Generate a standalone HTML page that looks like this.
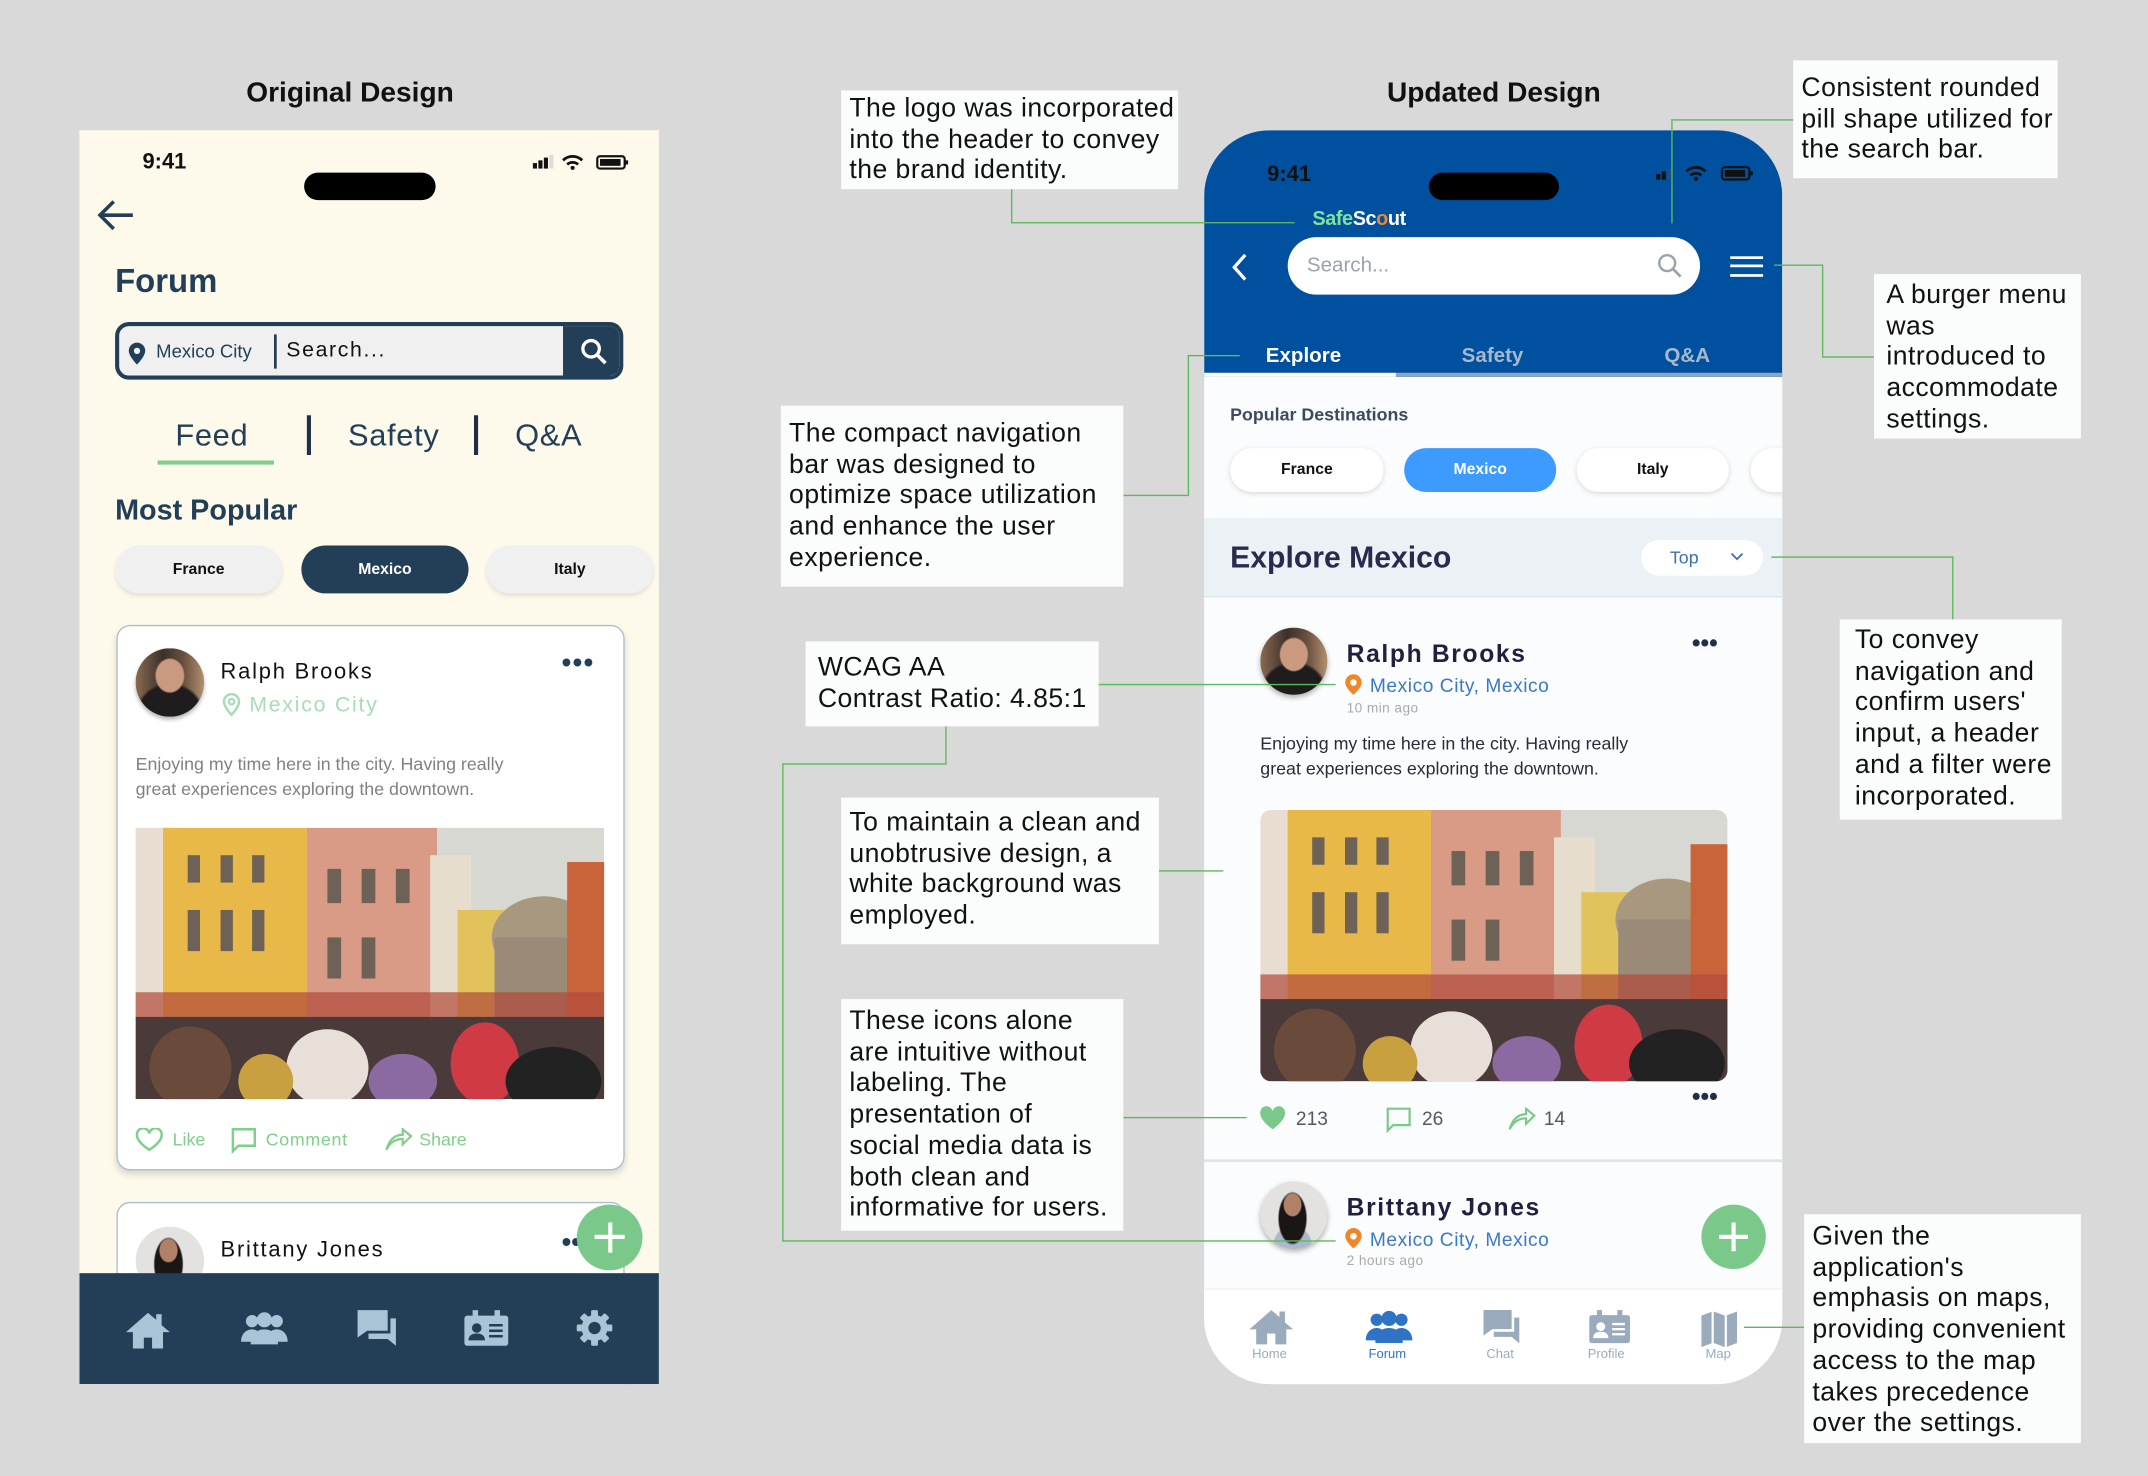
<!DOCTYPE html>
<html><head><meta charset="utf-8">
<style>
*{margin:0;padding:0;box-sizing:border-box}
html,body{width:2148px;height:1476px;overflow:hidden;background:#d9d9d9}
#s{position:absolute;left:0;top:0;width:1568px;height:1077px;transform:scale(1.36990,1.37047);transform-origin:0 0;font-family:"Liberation Sans",sans-serif}
.a{position:absolute}
.t{position:absolute;white-space:nowrap}
.box{position:absolute;background:#fbfdfc;color:#111;font-size:19.4px;letter-spacing:.35px;line-height:22.7px;padding:3px 6px;white-space:nowrap}
.gl{position:absolute;background:#5cb85c}
.h{height:1.4px}.v{width:1.4px}
.pill{position:absolute;border-radius:20px;font-size:11.5px;font-weight:bold;display:flex;align-items:center;justify-content:center}
.av1{background:radial-gradient(ellipse 22% 26% at 50% 40%,#c99a80 0 90%,transparent 100%),radial-gradient(ellipse 50% 45% at 50% 95%,#1e1c1c 0 90%,transparent 100%),linear-gradient(90deg,#8a6a50,#3a302a 40%,#6a5040 70%,#b09070)}
.av2{background:radial-gradient(ellipse 14% 18% at 48% 35%,#b08068 0 90%,transparent 100%),radial-gradient(ellipse 22% 40% at 48% 55%,#1a1616 0 90%,transparent 100%),radial-gradient(ellipse 30% 30% at 48% 95%,#a9b8cc 0 90%,transparent 100%),#e4e2e0}
</style></head><body><div id="s">

<div class="t" style="left:0;width:511px;text-align:center;top:56px;font-size:20.5px;font-weight:bold;color:#111">Original Design</div>
<div class="t" style="left:880px;width:421px;text-align:center;top:56px;font-size:20.5px;font-weight:bold;color:#111">Updated Design</div>

<!-- LEFT PHONE -->
<div class="a" style="left:58px;top:95px;width:423px;height:915px;background:#fdfaec;overflow:hidden">
  <div class="t" style="left:46px;top:15px;font-size:16px;font-weight:bold;color:#111">9:41</div>
  <div class="a" style="left:164px;top:31px;width:96px;height:20px;border-radius:10px;background:#000"></div>
  <svg class="a" style="left:329px;top:17px" width="72" height="14" viewBox="0 0 72 14"><rect x="2" y="7" width="3" height="4" fill="#111"/><rect x="6" y="5" width="3" height="6" fill="#111"/><rect x="10" y="3" width="3" height="8" fill="#111"/><rect x="14" y="1" width="3" height="10" fill="#ddd"/><path d="M24 5a10 10 0 0 1 14 0M27 8a6 6 0 0 1 8 0" stroke="#111" stroke-width="2" fill="none"/><circle cx="31" cy="10.5" r="1.5" fill="#111"/><rect x="49" y="2" width="20" height="9" rx="2" stroke="#111" stroke-width="1.6" fill="none"/><rect x="51" y="4" width="15" height="5" fill="#111"/><rect x="69.5" y="5" width="2" height="3" fill="#111"/></svg>
  <svg class="a" style="left:12px;top:49px" width="30" height="26" viewBox="0 0 30 26"><path d="M27 13H3M13 3L3 13l10 10" stroke="#223f57" stroke-width="2.6" fill="none"/></svg>
  <div class="t" style="left:26px;top:97px;font-size:24px;font-weight:bold;color:#223f57">Forum</div>
  <div class="a" style="left:26px;top:140px;width:371px;height:42px;border:3px solid #223f57;border-radius:10px;background:#f0f0f0;overflow:hidden">
    <svg class="a" style="left:5px;top:11px" width="16" height="18" viewBox="0 0 16 18"><path d="M8 1a6 6 0 0 1 6 6c0 4-6 10-6 10S2 11 2 7a6 6 0 0 1 6-6z" fill="#223f57"/><circle cx="8" cy="7" r="2.3" fill="#f0f0f0"/></svg>
    <div class="t" style="left:27px;top:11px;font-size:13.5px;color:#223f57">Mexico City</div>
    <div class="a" style="left:113px;top:6px;width:2px;height:25px;background:#223f57"></div>
    <div class="t" style="left:122px;top:9px;font-size:15.5px;color:#111;letter-spacing:1.2px">Search...</div>
    <div class="a" style="left:324px;top:-3px;width:50px;height:42px;background:#223f57"></div>
    <svg class="a" style="left:336px;top:8px" width="22" height="22" viewBox="0 0 22 22"><circle cx="8.5" cy="8.5" r="6" stroke="#fff" stroke-width="2.4" fill="none"/><path d="M13 13l6 6" stroke="#fff" stroke-width="2.6"/></svg>
  </div>
  <div class="t" style="left:70px;top:210px;font-size:22.5px;color:#223f57;letter-spacing:.5px">Feed</div>
  <div class="a" style="left:57px;top:241px;width:85px;height:3px;background:#7dcf8a"></div>
  <div class="a" style="left:166px;top:208px;width:3px;height:29px;background:#1f2f47"></div>
  <div class="t" style="left:196px;top:210px;font-size:22.5px;color:#223f57;letter-spacing:.5px">Safety</div>
  <div class="a" style="left:288px;top:208px;width:3px;height:29px;background:#1f2f47"></div>
  <div class="t" style="left:318px;top:210px;font-size:22.5px;color:#223f57;letter-spacing:.5px">Q&amp;A</div>
  <div class="t" style="left:26px;top:266px;font-size:21px;font-weight:bold;color:#223f57">Most Popular</div>
  <div class="pill" style="left:26px;top:303px;width:122px;height:35px;background:#f0f0f0;color:#111;box-shadow:0 2px 3px rgba(0,0,0,.1)">France</div>
  <div class="pill" style="left:162px;top:303px;width:122px;height:35px;background:#223f57;color:#fff">Mexico</div>
  <div class="pill" style="left:297px;top:303px;width:122px;height:35px;background:#f0f0f0;color:#111;box-shadow:0 2px 3px rgba(0,0,0,.1)">Italy</div>
  <div class="a" style="left:27px;top:361px;width:371px;height:398px;background:#fff;border:1px solid #a9c0cc;border-radius:10px;box-shadow:0 3px 5px rgba(0,0,0,.15)">
    <div class="a av1" style="left:13px;top:16px;width:50px;height:50px;border-radius:50%;box-shadow:0 2px 3px rgba(0,0,0,.3)"></div>
    <div class="t" style="left:75px;top:25px;font-size:16px;letter-spacing:1.3px;color:#111">Ralph Brooks</div>
    <svg class="a" style="left:75px;top:48px" width="16" height="18" viewBox="0 0 16 18"><path d="M8 1.5a5.5 5.5 0 0 1 5.5 5.5c0 4-5.5 9.5-5.5 9.5S2.5 11 2.5 7A5.5 5.5 0 0 1 8 1.5z" stroke="#a8dcb5" stroke-width="1.8" fill="none"/><circle cx="8" cy="7" r="2" stroke="#a8dcb5" stroke-width="1.6" fill="none"/></svg>
    <div class="t" style="left:96px;top:49px;font-size:15.5px;letter-spacing:1.3px;color:#a8dcb5">Mexico City</div>
    <div class="t" style="left:324px;top:16px;font-size:20px;font-weight:bold;color:#223f57;letter-spacing:1px">•••</div>
    <div class="t" style="left:13px;top:92px;font-size:13px;line-height:18px;color:#808080">Enjoying my time here in the city. Having really<br>great experiences exploring the downtown.</div>
    <svg class="a" style="left:13px;top:147px" width="342" height="198" viewBox="0 0 342 198" preserveAspectRatio="none">
      <rect width="342" height="198" fill="#d8d8d2"/>
      <rect x="0" y="0" width="25" height="198" fill="#e8ddd0"/>
      <rect x="20" y="0" width="105" height="170" fill="#e8b948"/>
      <rect x="125" y="0" width="95" height="175" fill="#d99a86"/>
      <rect x="215" y="20" width="30" height="150" fill="#e6ddcc"/>
      <rect x="235" y="60" width="35" height="110" fill="#e2c25a"/>
      <ellipse cx="298" cy="80" rx="38" ry="30" fill="#a89880"/>
      <rect x="262" y="80" width="70" height="100" fill="#9a8a78"/>
      <rect x="315" y="25" width="28" height="170" fill="#c9643a"/>
      <g fill="#6e6256"><rect x="38" y="20" width="9" height="20"/><rect x="62" y="20" width="9" height="20"/><rect x="85" y="20" width="9" height="20"/><rect x="38" y="60" width="9" height="30"/><rect x="62" y="60" width="9" height="30"/><rect x="85" y="60" width="9" height="30"/><rect x="140" y="30" width="10" height="25"/><rect x="165" y="30" width="10" height="25"/><rect x="190" y="30" width="10" height="25"/><rect x="140" y="80" width="10" height="30"/><rect x="165" y="80" width="10" height="30"/></g>
      <rect x="0" y="120" width="342" height="20" fill="#b04a3a" opacity=".7"/>
      <rect x="0" y="138" width="342" height="60" fill="#4a3a3a"/>
      <g><ellipse cx="40" cy="175" rx="30" ry="30" fill="#6a4a3a"/><ellipse cx="140" cy="175" rx="30" ry="28" fill="#e8e0d8"/><ellipse cx="255" cy="172" rx="25" ry="30" fill="#d03a44"/><ellipse cx="305" cy="185" rx="35" ry="25" fill="#222"/><ellipse cx="195" cy="185" rx="25" ry="20" fill="#8a6aa0"/><ellipse cx="95" cy="185" rx="20" ry="20" fill="#c9a040"/></g>
    </svg>
    <svg class="a" style="left:12px;top:366px" width="22" height="18" viewBox="0 0 22 18"><path d="M11 16S2 10.5 2 5.5A4.5 4.5 0 0 1 11 4a4.5 4.5 0 0 1 9 1.5C20 10.5 11 16 11 16z" stroke="#7dcf8a" stroke-width="1.8" fill="none"/></svg>
    <div class="t" style="left:40px;top:367px;font-size:13px;color:#7dcf8a">Like</div>
    <svg class="a" style="left:82px;top:365px" width="20" height="20" viewBox="0 0 20 20"><path d="M2 2h16v12H6l-4 4z" stroke="#7dcf8a" stroke-width="1.8" fill="none"/></svg>
    <div class="t" style="left:108px;top:367px;font-size:13px;color:#7dcf8a;letter-spacing:.5px">Comment</div>
    <svg class="a" style="left:194px;top:366px" width="22" height="18" viewBox="0 0 22 18"><path d="M2 16c3-6 7-8 12-8v4l6-6-6-5v4C8 5 4 9 2 16z" stroke="#7dcf8a" stroke-width="1.6" fill="none"/></svg>
    <div class="t" style="left:220px;top:367px;font-size:13px;color:#7dcf8a">Share</div>
  </div>
  <div class="a" style="left:27px;top:782px;width:371px;height:160px;background:#fff;border:1px solid #a9c0cc;border-radius:10px">
    <div class="a av2" style="left:13px;top:17px;width:50px;height:50px;border-radius:50%"></div>
    <div class="t" style="left:75px;top:26px;font-size:16px;letter-spacing:1.3px;color:#111">Brittany Jones</div>
    <div class="t" style="left:324px;top:18px;font-size:20px;font-weight:bold;color:#223f57">••</div>
  </div>
  <div class="a" style="left:363px;top:784px;width:48px;height:48px;border-radius:50%;background:#7bc98a"></div>
  <div class="a" style="left:376px;top:806px;width:22px;height:3px;background:#fff"></div>
  <div class="a" style="left:385.5px;top:797px;width:3px;height:22px;background:#fff"></div>
  <div class="a" style="left:0;top:834px;width:423px;height:81px;background:#223f57"></div>
  <svg class="a" style="left:32px;top:860px" width="36" height="30" viewBox="0 0 36 30"><path d="M18 3L2 17h5v12h8v-8h6v8h8V17h5l-6-5V4h-4v4z" fill="#a9c4d6"/></svg>
  <svg class="a" style="left:117px;top:862px" width="36" height="26" viewBox="0 0 36 26"><circle cx="9" cy="7" r="4.5" fill="#a9c4d6"/><circle cx="27" cy="7" r="4.5" fill="#a9c4d6"/><circle cx="18" cy="6" r="5.5" fill="#a9c4d6"/><path d="M1 22c0-6 4-9 8-9s7 3 7 9zM20 22c0-6 3-9 7-9s8 3 8 9zM8 24c0-7 4-11 10-11s10 4 10 11z" fill="#a9c4d6"/></svg>
  <svg class="a" style="left:201px;top:859px" width="32" height="30" viewBox="0 0 32 30"><path d="M2 2h22v15H9l-7 5z" fill="#a9c4d6"/><path d="M26 8h4v20l-6-5H10v-4h16z" fill="#a9c4d6"/></svg>
  <svg class="a" style="left:280px;top:860px" width="34" height="28" viewBox="0 0 34 28"><rect x="1" y="5" width="32" height="22" rx="2" fill="#a9c4d6"/><rect x="7" y="1" width="4" height="6" fill="#a9c4d6"/><rect x="23" y="1" width="4" height="6" fill="#a9c4d6"/><circle cx="10" cy="14" r="3.5" fill="#223f57"/><path d="M4 23c0-4 3-5 6-5s6 1 6 5z" fill="#223f57"/><path d="M19 12h10M19 16h10M19 20h10" stroke="#223f57" stroke-width="1.8"/></svg>
  <svg class="a" style="left:362px;top:860px" width="28" height="28" viewBox="0 0 28 28"><g fill="#a9c4d6"><circle cx="14" cy="14" r="9.5"/><rect x="11.5" y="1" width="5" height="26" rx="1"/><rect x="11.5" y="1" width="5" height="26" rx="1" transform="rotate(45 14 14)"/><rect x="11.5" y="1" width="5" height="26" rx="1" transform="rotate(90 14 14)"/><rect x="11.5" y="1" width="5" height="26" rx="1" transform="rotate(135 14 14)"/></g><circle cx="14" cy="14" r="4.5" fill="#223f57"/></svg>
</div>

<!-- RIGHT PHONE -->
<div class="a" style="left:879px;top:95px;width:422px;height:915px;background:#fbfcfd;border-radius:48px;overflow:hidden">
  <div class="a" style="left:0;top:0;width:422px;height:180px;background:#0050a0"></div>
  <div class="t" style="left:46px;top:24px;font-size:16px;font-weight:bold;color:#111">9:41</div>
  <div class="a" style="left:164px;top:31px;width:95px;height:20px;border-radius:10px;background:#000"></div>
  <svg class="a" style="left:328px;top:25px" width="74" height="14" viewBox="0 0 74 14"><rect x="2" y="7" width="3" height="4" fill="#111"/><rect x="6" y="5" width="3" height="6" fill="#111"/><rect x="10" y="3" width="3" height="8" fill="#1b4f8c"/><path d="M24 5a10 10 0 0 1 14 0M27 8a6 6 0 0 1 8 0" stroke="#111" stroke-width="2" fill="none"/><circle cx="31" cy="10.5" r="1.5" fill="#111"/><rect x="50" y="2" width="20" height="9" rx="2" stroke="#111" stroke-width="1.6" fill="none"/><rect x="52" y="4" width="15" height="5" fill="#111"/><rect x="70.5" y="5" width="2" height="3" fill="#111"/></svg>
  <div class="t" style="left:79px;top:57px;font-size:14.5px;font-weight:bold;letter-spacing:-.3px"><span style="color:#7de39a">Safe</span><span style="color:#fff">Sc<span style="color:#f0862a">o</span>ut</span></div>
  <svg class="a" style="left:18px;top:89px" width="16" height="22" viewBox="0 0 16 22"><path d="M12 2L4 11l8 9" stroke="#fff" stroke-width="2.4" fill="none"/></svg>
  <div class="a" style="left:61px;top:78px;width:301px;height:42px;border-radius:21px;background:#fff"></div>
  <div class="t" style="left:75px;top:90px;font-size:15px;color:#9aa3ac">Search...</div>
  <svg class="a" style="left:330px;top:89px" width="20" height="20" viewBox="0 0 20 20"><circle cx="8" cy="8" r="5.8" stroke="#9aa3ac" stroke-width="1.8" fill="none"/><path d="M12.3 12.3l5.5 5.5" stroke="#9aa3ac" stroke-width="2"/></svg>
  <div class="a" style="left:384px;top:92px;width:24px;height:2px;background:#fff"></div>
  <div class="a" style="left:384px;top:98px;width:24px;height:2px;background:#fff"></div>
  <div class="a" style="left:384px;top:105px;width:24px;height:2px;background:#fff"></div>
  <div class="t" style="left:45px;top:156px;font-size:15px;font-weight:bold;color:#fff">Explore</div>
  <div class="t" style="left:188px;top:156px;font-size:15px;font-weight:bold;color:#a8b8cc">Safety</div>
  <div class="t" style="left:336px;top:156px;font-size:15px;font-weight:bold;color:#a8b8cc">Q&amp;A</div>
  <div class="a" style="left:0;top:177px;width:140px;height:3px;background:#fff"></div>
  <div class="a" style="left:140px;top:177px;width:282px;height:3px;background:#8fa6bf"></div>
  <div class="t" style="left:19px;top:200px;font-size:13px;font-weight:bold;color:#3b4a5e">Popular Destinations</div>
  <div class="pill" style="left:19px;top:232px;width:112px;height:32px;background:#fff;color:#111;box-shadow:0 1px 4px rgba(0,0,0,.15)">France</div>
  <div class="pill" style="left:146px;top:232px;width:111px;height:32px;background:#3d9bff;color:#fff">Mexico</div>
  <div class="pill" style="left:272px;top:232px;width:111px;height:32px;background:#fff;color:#111;box-shadow:0 1px 4px rgba(0,0,0,.15)">Italy</div>
  <div class="pill" style="left:399px;top:232px;width:60px;height:32px;background:#fff;box-shadow:0 1px 4px rgba(0,0,0,.15)"></div>
  <div class="a" style="left:0;top:283px;width:422px;height:58px;background:#ebf1f5;border-bottom:1px solid #dde5ec"></div>
  <div class="t" style="left:19px;top:299px;font-size:22px;font-weight:bold;color:#2a2a4e">Explore Mexico</div>
  <div class="a" style="left:319px;top:299px;width:89px;height:26px;border-radius:13px;background:#fff"></div>
  <div class="t" style="left:340px;top:304px;font-size:13px;color:#3a70b0">Top</div>
  <svg class="a" style="left:384px;top:308px" width="10" height="7" viewBox="0 0 10 7"><path d="M1 1l4 4 4-4" stroke="#3a70b0" stroke-width="1.3" fill="none"/></svg>
  <div class="a av1" style="left:41px;top:363px;width:49px;height:49px;border-radius:50%;box-shadow:0 2px 4px rgba(0,0,0,.3)"></div>
  <div class="t" style="left:104px;top:372px;font-size:18px;font-weight:bold;letter-spacing:1.2px;color:#1f1f3f">Ralph Brooks</div>
  <svg class="a" style="left:102px;top:396px" width="14" height="17" viewBox="0 0 14 17"><path d="M7 1a6 6 0 0 1 6 6c0 4-6 9-6 9S1 11 1 7a6 6 0 0 1 6-6z" fill="#f0862a"/><circle cx="7" cy="7" r="2.4" fill="#fff"/></svg>
  <div class="t" style="left:121px;top:397px;font-size:14px;letter-spacing:.4px;color:#3a78c8">Mexico City, Mexico</div>
  <div class="t" style="left:104px;top:417px;font-size:10px;letter-spacing:.3px;color:#aaa">10 min ago</div>
  <div class="t" style="left:356px;top:364px;font-size:18px;font-weight:bold;color:#1f2f47">•••</div>
  <div class="t" style="left:41px;top:439px;font-size:13px;line-height:18px;color:#2a2a3a">Enjoying my time here in the city. Having really<br>great experiences exploring the downtown.</div>
  <svg class="a" style="left:41px;top:496px;border-radius:8px" width="341" height="198" viewBox="0 0 342 198" preserveAspectRatio="none">
      <rect width="342" height="198" fill="#d8d8d2"/>
      <rect x="0" y="0" width="25" height="198" fill="#e8ddd0"/>
      <rect x="20" y="0" width="105" height="170" fill="#e8b948"/>
      <rect x="125" y="0" width="95" height="175" fill="#d99a86"/>
      <rect x="215" y="20" width="30" height="150" fill="#e6ddcc"/>
      <rect x="235" y="60" width="35" height="110" fill="#e2c25a"/>
      <ellipse cx="298" cy="80" rx="38" ry="30" fill="#a89880"/>
      <rect x="262" y="80" width="70" height="100" fill="#9a8a78"/>
      <rect x="315" y="25" width="28" height="170" fill="#c9643a"/>
      <g fill="#6e6256"><rect x="38" y="20" width="9" height="20"/><rect x="62" y="20" width="9" height="20"/><rect x="85" y="20" width="9" height="20"/><rect x="38" y="60" width="9" height="30"/><rect x="62" y="60" width="9" height="30"/><rect x="85" y="60" width="9" height="30"/><rect x="140" y="30" width="10" height="25"/><rect x="165" y="30" width="10" height="25"/><rect x="190" y="30" width="10" height="25"/><rect x="140" y="80" width="10" height="30"/><rect x="165" y="80" width="10" height="30"/></g>
      <rect x="0" y="120" width="342" height="20" fill="#b04a3a" opacity=".7"/>
      <rect x="0" y="138" width="342" height="60" fill="#4a3a3a"/>
      <g><ellipse cx="40" cy="175" rx="30" ry="30" fill="#6a4a3a"/><ellipse cx="140" cy="175" rx="30" ry="28" fill="#e8e0d8"/><ellipse cx="255" cy="172" rx="25" ry="30" fill="#d03a44"/><ellipse cx="305" cy="185" rx="35" ry="25" fill="#222"/><ellipse cx="195" cy="185" rx="25" ry="20" fill="#8a6aa0"/><ellipse cx="95" cy="185" rx="20" ry="20" fill="#c9a040"/></g>
  </svg>
  <div class="t" style="left:356px;top:695px;font-size:18px;font-weight:bold;color:#1f2f47">•••</div>
  <svg class="a" style="left:40px;top:712px" width="20" height="18" viewBox="0 0 20 18"><path d="M10 17S1 11 1 5.5A4.5 4.5 0 0 1 10 4a4.5 4.5 0 0 1 9 1.5C19 11 10 17 10 17z" fill="#7bc98a"/></svg>
  <div class="t" style="left:67px;top:713px;font-size:14px;color:#556">213</div>
  <svg class="a" style="left:132px;top:712px" width="20" height="20" viewBox="0 0 20 20"><path d="M2 2h16v12H6l-4 4z" stroke="#7bc98a" stroke-width="1.6" fill="none"/></svg>
  <div class="t" style="left:159px;top:713px;font-size:14px;color:#556">26</div>
  <svg class="a" style="left:221px;top:713px" width="22" height="18" viewBox="0 0 22 18"><path d="M2 16c3-6 7-8 12-8v4l6-6-6-5v4C8 5 4 9 2 16z" stroke="#7bc98a" stroke-width="1.6" fill="none"/></svg>
  <div class="t" style="left:248px;top:713px;font-size:14px;color:#556">14</div>
  <div class="a" style="left:0;top:751px;width:422px;height:1.5px;background:#dde5ec"></div>
  <div class="a av2" style="left:41px;top:767px;width:49px;height:49px;border-radius:50%;box-shadow:0 2px 4px rgba(0,0,0,.3)"></div>
  <div class="t" style="left:104px;top:776px;font-size:18px;font-weight:bold;letter-spacing:1.2px;color:#1f1f3f">Brittany Jones</div>
  <svg class="a" style="left:102px;top:800px" width="14" height="17" viewBox="0 0 14 17"><path d="M7 1a6 6 0 0 1 6 6c0 4-6 9-6 9S1 11 1 7a6 6 0 0 1 6-6z" fill="#f0862a"/><circle cx="7" cy="7" r="2.4" fill="#fff"/></svg>
  <div class="t" style="left:121px;top:801px;font-size:14px;letter-spacing:.4px;color:#3a78c8">Mexico City, Mexico</div>
  <div class="t" style="left:104px;top:820px;font-size:10px;letter-spacing:.3px;color:#aaa">2 hours ago</div>
  <div class="a" style="left:363px;top:784px;width:47px;height:47px;border-radius:50%;background:#7bc98a"></div>
  <div class="a" style="left:376px;top:806px;width:21px;height:3px;background:#fff"></div>
  <div class="a" style="left:385px;top:797px;width:3px;height:21px;background:#fff"></div>
  <div class="a" style="left:0;top:845px;width:422px;height:70px;background:#fff;border-top:1.5px solid #eef1f4"></div>
  <svg class="a" style="left:31px;top:859px" width="36" height="28" viewBox="0 0 36 28"><path d="M18 2L2 16h5v11h8v-8h6v8h8V16h5l-6-5V3h-4v4z" fill="#9aabbd"/></svg>
  <svg class="a" style="left:117px;top:861px" width="36" height="26" viewBox="0 0 36 26"><circle cx="9" cy="7" r="4.5" fill="#2f74c4"/><circle cx="27" cy="7" r="4.5" fill="#2f74c4"/><circle cx="18" cy="6" r="5.5" fill="#2f74c4"/><path d="M1 22c0-6 4-9 8-9s7 3 7 9zM20 22c0-6 3-9 7-9s8 3 8 9zM8 24c0-7 4-11 10-11s10 4 10 11z" fill="#2f74c4"/></svg>
  <svg class="a" style="left:202px;top:859px" width="30" height="28" viewBox="0 0 32 30"><path d="M2 2h22v15H9l-7 5z" fill="#9aabbd"/><path d="M26 8h4v20l-6-5H10v-4h16z" fill="#9aabbd"/></svg>
  <svg class="a" style="left:279px;top:860px" width="34" height="26" viewBox="0 0 34 28"><rect x="1" y="5" width="32" height="22" rx="2" fill="#9aabbd"/><rect x="7" y="1" width="4" height="6" fill="#9aabbd"/><rect x="23" y="1" width="4" height="6" fill="#9aabbd"/><circle cx="10" cy="14" r="3.5" fill="#fff"/><path d="M4 23c0-4 3-5 6-5s6 1 6 5z" fill="#fff"/><path d="M19 12h10M19 16h10M19 20h10" stroke="#fff" stroke-width="1.8"/></svg>
  <svg class="a" style="left:362px;top:860px" width="28" height="28" viewBox="0 0 28 28"><path d="M1 5l8-3v23l-8 3zM10 2l8 3v23l-8-3zM19 5l8-3v23l-8 3z" fill="#9aabbd"/><path d="M9 2v23M19 5v23" stroke="#fff" stroke-width="1.2"/></svg>
  <div class="t" style="left:35px;top:888px;font-size:9.5px;color:#9aabbd">Home</div>
  <div class="t" style="left:120px;top:888px;font-size:9.5px;color:#2f74c4">Forum</div>
  <div class="t" style="left:206px;top:888px;font-size:9.5px;color:#9aabbd">Chat</div>
  <div class="t" style="left:280px;top:888px;font-size:9.5px;color:#9aabbd">Profile</div>
  <div class="t" style="left:366px;top:888px;font-size:9.5px;color:#9aabbd">Map</div>
</div>

<div class="gl v" style="left:738px;top:138px;height:25px"></div>
<div class="gl h" style="left:738px;top:162px;width:207px"></div>
<div class="gl h" style="left:1220px;top:87px;width:89px"></div>
<div class="gl v" style="left:1220px;top:87px;height:76px"></div>
<div class="gl h" style="left:1330px;top:260px;width:38px"></div>
<div class="gl v" style="left:1330px;top:193px;height:67px"></div>
<div class="gl h" style="left:1295px;top:193px;width:35px"></div>
<div class="gl h" style="left:820px;top:361px;width:47px"></div>
<div class="gl v" style="left:867px;top:259px;height:103px"></div>
<div class="gl h" style="left:867px;top:259px;width:38px"></div>
<div class="gl h" style="left:802px;top:499px;width:173px"></div>
<div class="gl v" style="left:690px;top:530px;height:28px"></div>
<div class="gl h" style="left:571px;top:557px;width:120px"></div>
<div class="gl v" style="left:571px;top:557px;height:349px"></div>
<div class="gl h" style="left:571px;top:905px;width:404px"></div>
<div class="gl h" style="left:846px;top:635px;width:47px"></div>
<div class="gl h" style="left:820px;top:815px;width:90px"></div>
<div class="gl v" style="left:1425px;top:406px;height:46px"></div>
<div class="gl h" style="left:1293px;top:406px;width:133px"></div>
<div class="gl h" style="left:1273px;top:968px;width:44px"></div>

<div class="box" style="left:614px;top:66px;width:246px;height:72px;padding-top:2px">The logo was incorporated<br>into the header to convey<br>the brand identity.</div>
<div class="box" style="left:1309px;top:44px;width:193px;height:86px;padding-top:9px">Consistent rounded<br>pill shape utilized for<br>the search bar.</div>
<div class="box" style="left:1368px;top:200px;width:151px;height:120px;padding-left:9px;padding-top:4px">A burger menu<br>was<br>introduced to<br>accommodate<br>settings.</div>
<div class="box" style="left:570px;top:296px;width:250px;height:132px;padding-top:9px">The compact navigation<br>bar was designed to<br>optimize space utilization<br>and enhance the user<br>experience.</div>
<div class="box" style="left:588px;top:468px;width:214px;height:62px;padding:8px 9px">WCAG AA<br>Contrast Ratio: 4.85:1</div>
<div class="box" style="left:614px;top:582px;width:232px;height:107px;padding-top:7px">To maintain a clean and<br>unobtrusive design, a<br>white background was<br>employed.</div>
<div class="box" style="left:614px;top:729px;width:206px;height:169px;padding-top:5px">These icons alone<br>are intuitive without<br>labeling. The<br>presentation of<br>social media data is<br>both clean and<br>informative for users.</div>
<div class="box" style="left:1343px;top:452px;width:162px;height:146px;padding:4px 11px">To convey<br>navigation and<br>confirm users'<br>input, a header<br>and a filter were<br>incorporated.</div>
<div class="box" style="left:1317px;top:886px;width:202px;height:167px;padding-top:5px">Given the<br>application's<br>emphasis on maps,<br>providing convenient<br>access to the map<br>takes precedence<br>over the settings.</div>

</div></body></html>
